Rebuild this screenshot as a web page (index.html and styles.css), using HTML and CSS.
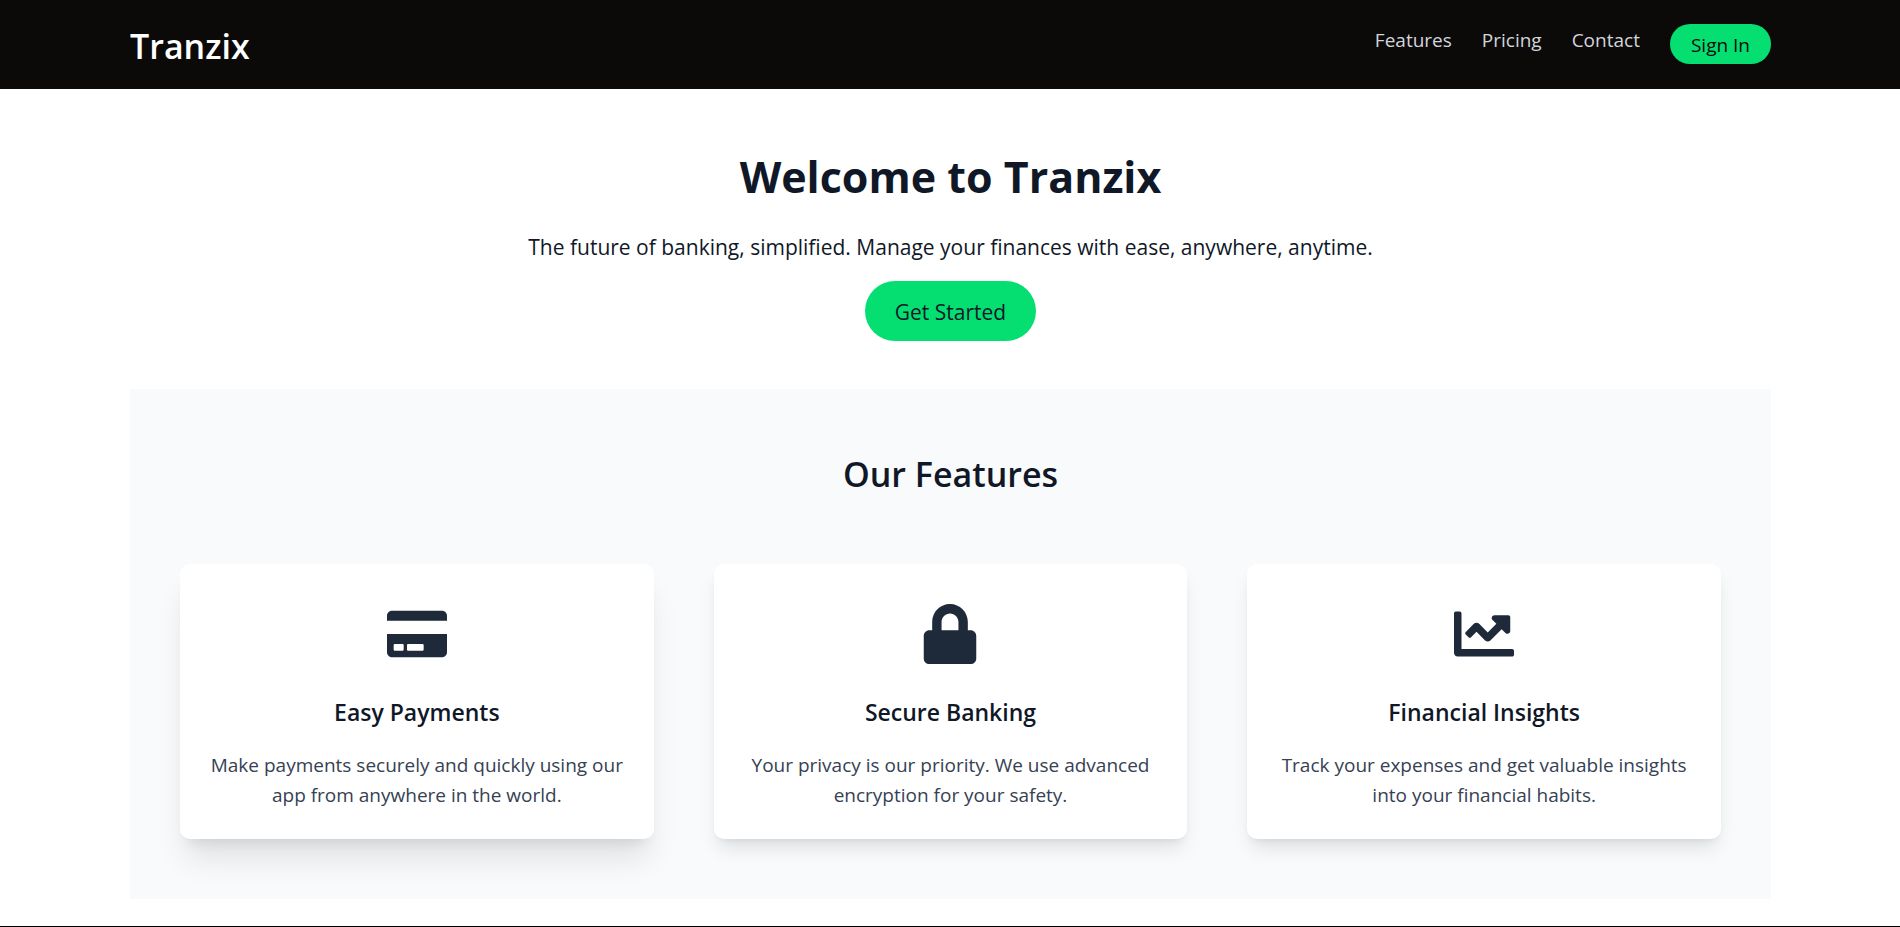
FILE: index.html
```html
<!DOCTYPE html>
<html lang="en">
<head>
<meta charset="utf-8">
<meta name="viewport" content="width=device-width, initial-scale=1">
<title>Tranzix</title>
<link rel="stylesheet" href="styles.css">
</head>
<body>
<header class="header">
  <div class="logo">Tranzix</div>
  <nav class="nav">
    <a class="nav-link" href="#features">Features</a>
    <a class="nav-link" href="#pricing">Pricing</a>
    <a class="nav-link" href="#contact">Contact</a>
    <button class="btn btn-small" type="button">Sign In</button>
  </nav>
</header>
<main class="container">
  <section class="hero">
    <h1 class="hero-title">Welcome to Tranzix</h1>
    <p class="hero-text">The future of banking, simplified. Manage your finances with ease, anywhere, anytime.</p>
    <button class="btn btn-large" type="button">Get Started</button>
  </section>
  <section class="features" id="features">
    <h2 class="features-title">Our Features</h2>
    <div class="cards">
      <article class="card card-raised">
        <svg class="card-icon" viewBox="0 0 576 512" aria-hidden="true"><path d="M0 432c0 26.500 21.500 48 48 48h480c26.500 0 48-21.500 48-48V256H0v176zm192-68c0-6.600 5.400-12 12-12h136c6.600 0 12 5.400 12 12v40c0 6.600-5.400 12-12 12H204c-6.600 0-12-5.400-12-12v-40zm-128 0c0-6.600 5.400-12 12-12h72c6.600 0 12 5.400 12 12v40c0 6.600-5.400 12-12 12H76c-6.600 0-12-5.400-12-12v-40zM576 80v48H0V80c0-26.500 21.500-48 48-48h480c26.500 0 48 21.500 48 48z"/></svg>
        <h3 class="card-title">Easy Payments</h3>
        <p class="card-text">Make payments securely and quickly using our app from anywhere in the world.</p>
      </article>
      <article class="card">
        <svg class="card-icon" viewBox="0 0 448 512" aria-hidden="true"><path d="M400 224h-24v-72C376 68.200 307.800 0 224 0S72 68.200 72 152v72H48c-26.500 0-48 21.500-48 48v192c0 26.500 21.500 48 48 48h352c26.500 0 48-21.500 48-48V272c0-26.500-21.500-48-48-48zm-104 0H152v-72c0-39.700 32.300-72 72-72s72 32.300 72 72v72z"/></svg>
        <h3 class="card-title">Secure Banking</h3>
        <p class="card-text">Your privacy is our priority. We use advanced encryption for your safety.</p>
      </article>
      <article class="card">
        <svg class="card-icon" viewBox="0 0 512 512" aria-hidden="true"><path d="M496 384H64V80c0-8.840-7.160-16-16-16H16C7.160 64 0 71.160 0 80v336c0 17.670 14.330 32 32 32h464c8.840 0 16-7.160 16-16v-32c0-8.840-7.160-16-16-16zM464 96H345.940c-21.380 0-32.090 25.850-16.970 40.970l32.400 32.400L288 242.750l-73.370-73.370c-12.500-12.500-32.760-12.500-45.250 0l-68.690 68.690c-6.250 6.250-6.250 16.380 0 22.630l22.620 22.620c6.250 6.250 16.380 6.250 22.630 0L192 237.250l73.370 73.370c12.500 12.500 32.760 12.500 45.250 0l96-96 32.400 32.400c15.120 15.120 40.970 4.410 40.970-16.970V112c.01-8.840-7.150-16-15.990-16z"/></svg>
        <h3 class="card-title">Financial Insights</h3>
        <p class="card-text">Track your expenses and get valuable insights into your financial habits.</p>
      </article>
    </div>
  </section>
</main>
<footer class="footer"></footer>
</body>
</html>
```
FILE: styles.css
```css
* {
  box-sizing: border-box;
  margin: 0;
  padding: 0;
}

body {
  background: #fff;
  color: #101828;
  font-family: "Segoe UI", "Open Sans", "Noto Sans", sans-serif;
  font-size: 19px;
  line-height: 30px;
}

.header {
  display: flex;
  justify-content: space-between;
  align-items: flex-start;
  padding: 24px 129px 20px 130px;
  background: #0c0a09;
}

.logo {
  color: #fff;
  font-size: 34px;
  font-weight: 600;
  line-height: 45px;
}

.nav {
  display: flex;
  align-items: flex-start;
  gap: 30px;
}

.nav-link {
  color: #d1d5dc;
  line-height: 32px;
  text-decoration: none;
}

.btn {
  border: 0;
  border-radius: 30px;
  background: #05df72;
  font-family: inherit;
  cursor: pointer;
}

.btn-small {
  padding: 6px 21px 4px;
  color: #0c0a09;
  font-size: 19px;
  line-height: 30px;
}

.btn-large {
  padding: 16px 30px 14px;
  color: #101828;
  font-size: 21px;
  line-height: 30px;
}

.container {
  padding: 0 129px 27px 130px;
}

.hero {
  display: flex;
  flex-direction: column;
  align-items: center;
  padding: 63px 0 48px;
  text-align: center;
}

.hero-title {
  margin-bottom: 26px;
  font-size: 43px;
  font-weight: 700;
  line-height: 50px;
}

.hero-text {
  margin-bottom: 15px;
  font-size: 21px;
  line-height: 38px;
}

.features {
  padding: 60px 50px;
  background: #f9fafb;
  text-align: center;
}

.features-title {
  margin-bottom: 65px;
  font-size: 34px;
  font-weight: 600;
  line-height: 50px;
}

.cards {
  display: grid;
  grid-template-columns: repeat(3, 1fr);
  gap: 60px;
}

.card {
  padding: 40px 30px 29px;
  border-radius: 10px;
  background: #fff;
  box-shadow: 0 13px 19px -4px rgba(0, 0, 0, 0.1), 0 5px 8px -5px rgba(0, 0, 0, 0.1);
}

.card-raised {
  box-shadow: 0 25px 31px -6px rgba(0, 0, 0, 0.1), 0 10px 13px -8px rgba(0, 0, 0, 0.1);
}

.card-icon {
  display: block;
  width: 60px;
  height: 60px;
  margin: 0 auto 31px;
  fill: #1e2939;
}

.card-title {
  margin-bottom: 20px;
  font-size: 23px;
  font-weight: 600;
  line-height: 35px;
}

.card-text {
  color: #364153;
}

.footer {
  border-top: 1px solid #000;
}
```
